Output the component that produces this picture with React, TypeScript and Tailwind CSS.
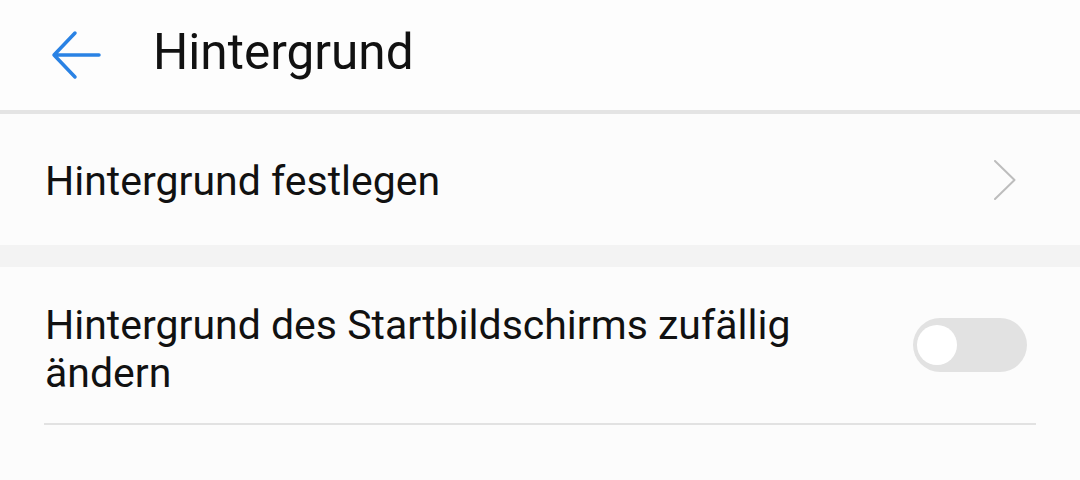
import React from "react";

export default function App() {
  return (
    <div
      className="w-[1080px] h-[480px] bg-[#fcfcfc] text-[#111] overflow-hidden"
      style={{ fontFamily: "Roboto, 'Noto Sans', sans-serif" }}
    >
      <header className="h-[110px] flex items-center bg-[#fdfdfd]">
        <div className="ml-[50px] w-[52px] h-[52px] flex items-center justify-center">
          <svg width="52" height="52" viewBox="0 0 52 52" fill="none">
            <path
              d="M49 26H4M4 26L25 4M4 26L25 48"
              stroke="#2a82e4"
              strokeWidth="3.5"
              strokeLinecap="round"
              strokeLinejoin="round"
            />
          </svg>
        </div>
        <h1 className="ml-[51px] text-[49.5px] leading-none mt-[-5px] font-normal">Hintergrund</h1>
      </header>
      <div className="h-[4px] bg-[#e4e4e4]" />
      <div className="h-[131px] flex items-center justify-between pl-[45px] pr-[64px]">
        <span className="text-[41px] leading-none mt-[3px]">Hintergrund festlegen</span>
        <svg width="22" height="40" viewBox="0 0 22 40" fill="none">
          <path d="M1 1L20.5 20L1 39" stroke="#bdbdbd" strokeWidth="2" strokeLinecap="round" strokeLinejoin="round" />
        </svg>
      </div>
      <div className="h-[22px] bg-[#f3f3f3]" />
      <div className="h-[156px] flex items-center pl-[45px] pr-[53px]">
        <span className="w-[850px] text-[41px] leading-[48px] mt-[7px]">
          Hintergrund des Startbildschirms zufällig ändern
        </span>
        <div className="ml-auto w-[114px] h-[54px] rounded-full bg-[#e2e2e2] flex items-center pl-[4px]">
          <div className="w-[40px] h-[40px] rounded-full bg-white" />
        </div>
      </div>
      <div className="mx-[44px] h-[2px] bg-[#e2e2e2]" />
    </div>
  );
}
